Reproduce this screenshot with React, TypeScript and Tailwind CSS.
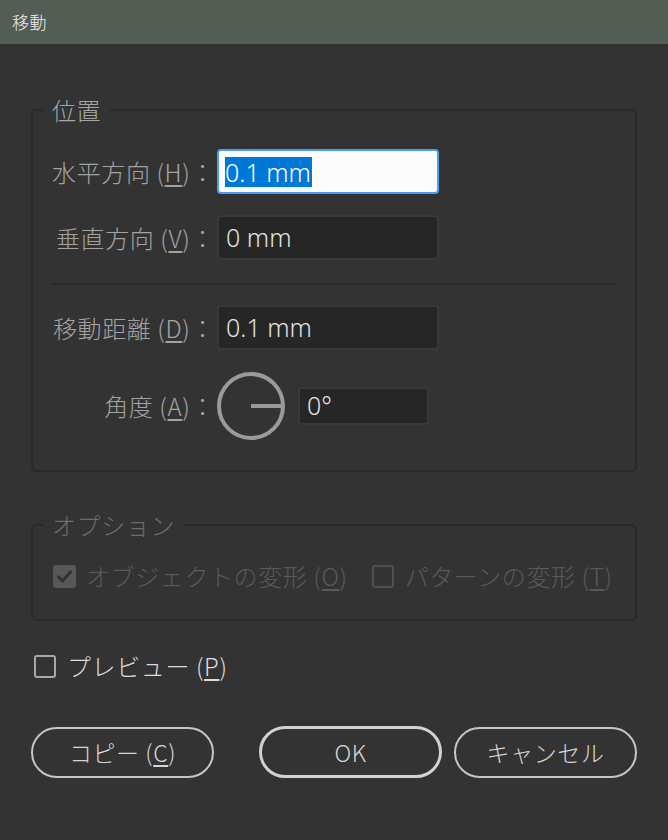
import React from "react";

const jp = { fontFamily: "'Noto Sans CJK JP', 'Noto Sans', sans-serif" };
const lat = { fontFamily: "'Noto Sans', 'Noto Sans CJK JP', sans-serif" };

function Label({ children, k }: { children: React.ReactNode; k: string }) {
  return (
    <div className="w-[182px] shrink-0 text-right text-[24px] leading-[30px] tracking-[0.6px] text-[#a3a3a3] whitespace-nowrap">
      {children} (<u className="underline-offset-[3px] decoration-[2px]">{k}</u>)：
    </div>
  );
}

function DarkInput({ value, w, h }: { value: string; w: string; h: string }) {
  return (
    <div
      className={`${w} ${h} flex items-center rounded-[4px] border-2 border-[#393939] bg-[#262626] pl-[7px] text-[25px] text-[#e2e2e2]`}
      style={lat}
    >
      {value}
    </div>
  );
}

export default function App() {
  return (
    <div className="w-[668px] h-[840px] bg-[#333333] flex flex-col font-light" style={jp}>
      <div className="h-[44px] shrink-0 bg-[#545d54] flex items-center pl-[12px] text-[17px] tracking-[0.5px] text-[#f0f0f0]">
        移動
      </div>
      <div className="flex flex-col px-[31px]">
        {/* 位置 */}
        <fieldset className="mt-[52px] border-2 border-[#2a2a2a] rounded-[5px] pl-[10px] pr-0 pt-[25px] pb-[30px]">
          <legend className="px-[9px] text-[24px] leading-[28px] tracking-[0.6px] text-[#a6a6a6]">位置</legend>
          <div className="flex flex-col -ml-[10px]">
            <div className="flex items-center gap-[2px]">
              <Label k="H">水平方向</Label>
              <div className="w-[222px] h-[45px] flex items-center rounded-[4px] border-2 border-[#4a9df2] bg-[#fbfbfb] pl-[6px]">
                <span className="bg-[#0078d7] text-white text-[25px] leading-[30px] pr-[1px]" style={lat}>
                  0.1 mm
                </span>
              </div>
            </div>
            <div className="flex items-center gap-[2px] mt-[21px]">
              <Label k="V">垂直方向</Label>
              <DarkInput value="0 mm" w="w-[222px]" h="h-[45px]" />
            </div>
            <div className="h-[2px] bg-[#2a2a2a] mt-[23px] ml-[19px] mr-[18px]" />
            <div className="flex items-center gap-[2px] mt-[20px]">
              <Label k="D">移動距離</Label>
              <DarkInput value="0.1 mm" w="w-[222px]" h="h-[45px]" />
            </div>
            <div className="flex items-center gap-[2px] mt-[22px]">
              <Label k="A">角度</Label>
              <svg width="68" height="68" viewBox="0 0 68 68" className="shrink-0">
                <circle cx="34" cy="34" r="32" fill="none" stroke="#9a9a9a" strokeWidth="4" />
                <line x1="34" y1="34" x2="65" y2="34" stroke="#9a9a9a" strokeWidth="4" />
              </svg>
              <div className="ml-[11px]">
                <DarkInput value="0°" w="w-[131px]" h="h-[38px]" />
              </div>
            </div>
          </div>
        </fieldset>

        {/* オプション */}
        <fieldset className="mt-[39px] border-2 border-[#2a2a2a] rounded-[5px] pl-[10px] pr-0 pt-[22px] pb-[28px]">
          <legend className="px-[9px] text-[24px] leading-[28px] tracking-[0.6px] text-[#6c6c6c]">オプション</legend>
          <div className="flex items-center -ml-[10px] pl-[20px] text-[24px] leading-[30px] tracking-[0.6px] text-[#595959]">
            <div className="w-[23px] h-[23px] rounded-[3px] bg-[#585858] flex items-center justify-center shrink-0">
              <svg width="17" height="17" viewBox="0 0 17 17">
                <polyline points="2.5,9 6.5,13 14.5,4" fill="none" stroke="#333333" strokeWidth="3.2" strokeLinecap="round" strokeLinejoin="round" />
              </svg>
            </div>
            <span className="ml-[10px] whitespace-nowrap">
              オブジェクトの変形 (<u className="underline-offset-[3px] decoration-[2px]">O</u>)
            </span>
            <div className="ml-[24px] w-[22px] h-[23px] rounded-[3px] border-2 border-[#4e4e4e] shrink-0" />
            <span className="ml-[11px] whitespace-nowrap">
              パターンの変形 (<u className="underline-offset-[3px] decoration-[2px]">T</u>)
            </span>
          </div>
        </fieldset>

        {/* プレビュー */}
        <div className="mt-[30px] flex items-center text-[24px] leading-[30px] tracking-[0.6px] text-[#dcdcdc]">
          <div className="ml-[3px] w-[22px] h-[23px] rounded-[3px] border-2 border-[#a8a8a8] shrink-0" />
          <span className="ml-[11px] whitespace-nowrap">
            プレビュー (<u className="underline-offset-[3px] decoration-[2px]">P</u>)
          </span>
        </div>

        {/* Buttons */}
        <div className="mt-[45px] flex items-center justify-between text-[23px] tracking-[0.6px] text-[#d6d6d6]">
          <button className="w-[183px] h-[51px] rounded-full border-2 border-[#c6c6c6] flex items-center justify-center">
            コピー (<u className="underline-offset-[3px] decoration-[2px]">C</u>)
          </button>
          <div className="flex items-center gap-[12px]">
            <button className="w-[183px] h-[52px] rounded-full border-[3px] border-[#d2d2d2] flex items-center justify-center">
              OK
            </button>
            <button className="w-[183px] h-[51px] rounded-full border-2 border-[#c6c6c6] flex items-center justify-center">
              キャンセル
            </button>
          </div>
        </div>
      </div>
    </div>
  );
}
